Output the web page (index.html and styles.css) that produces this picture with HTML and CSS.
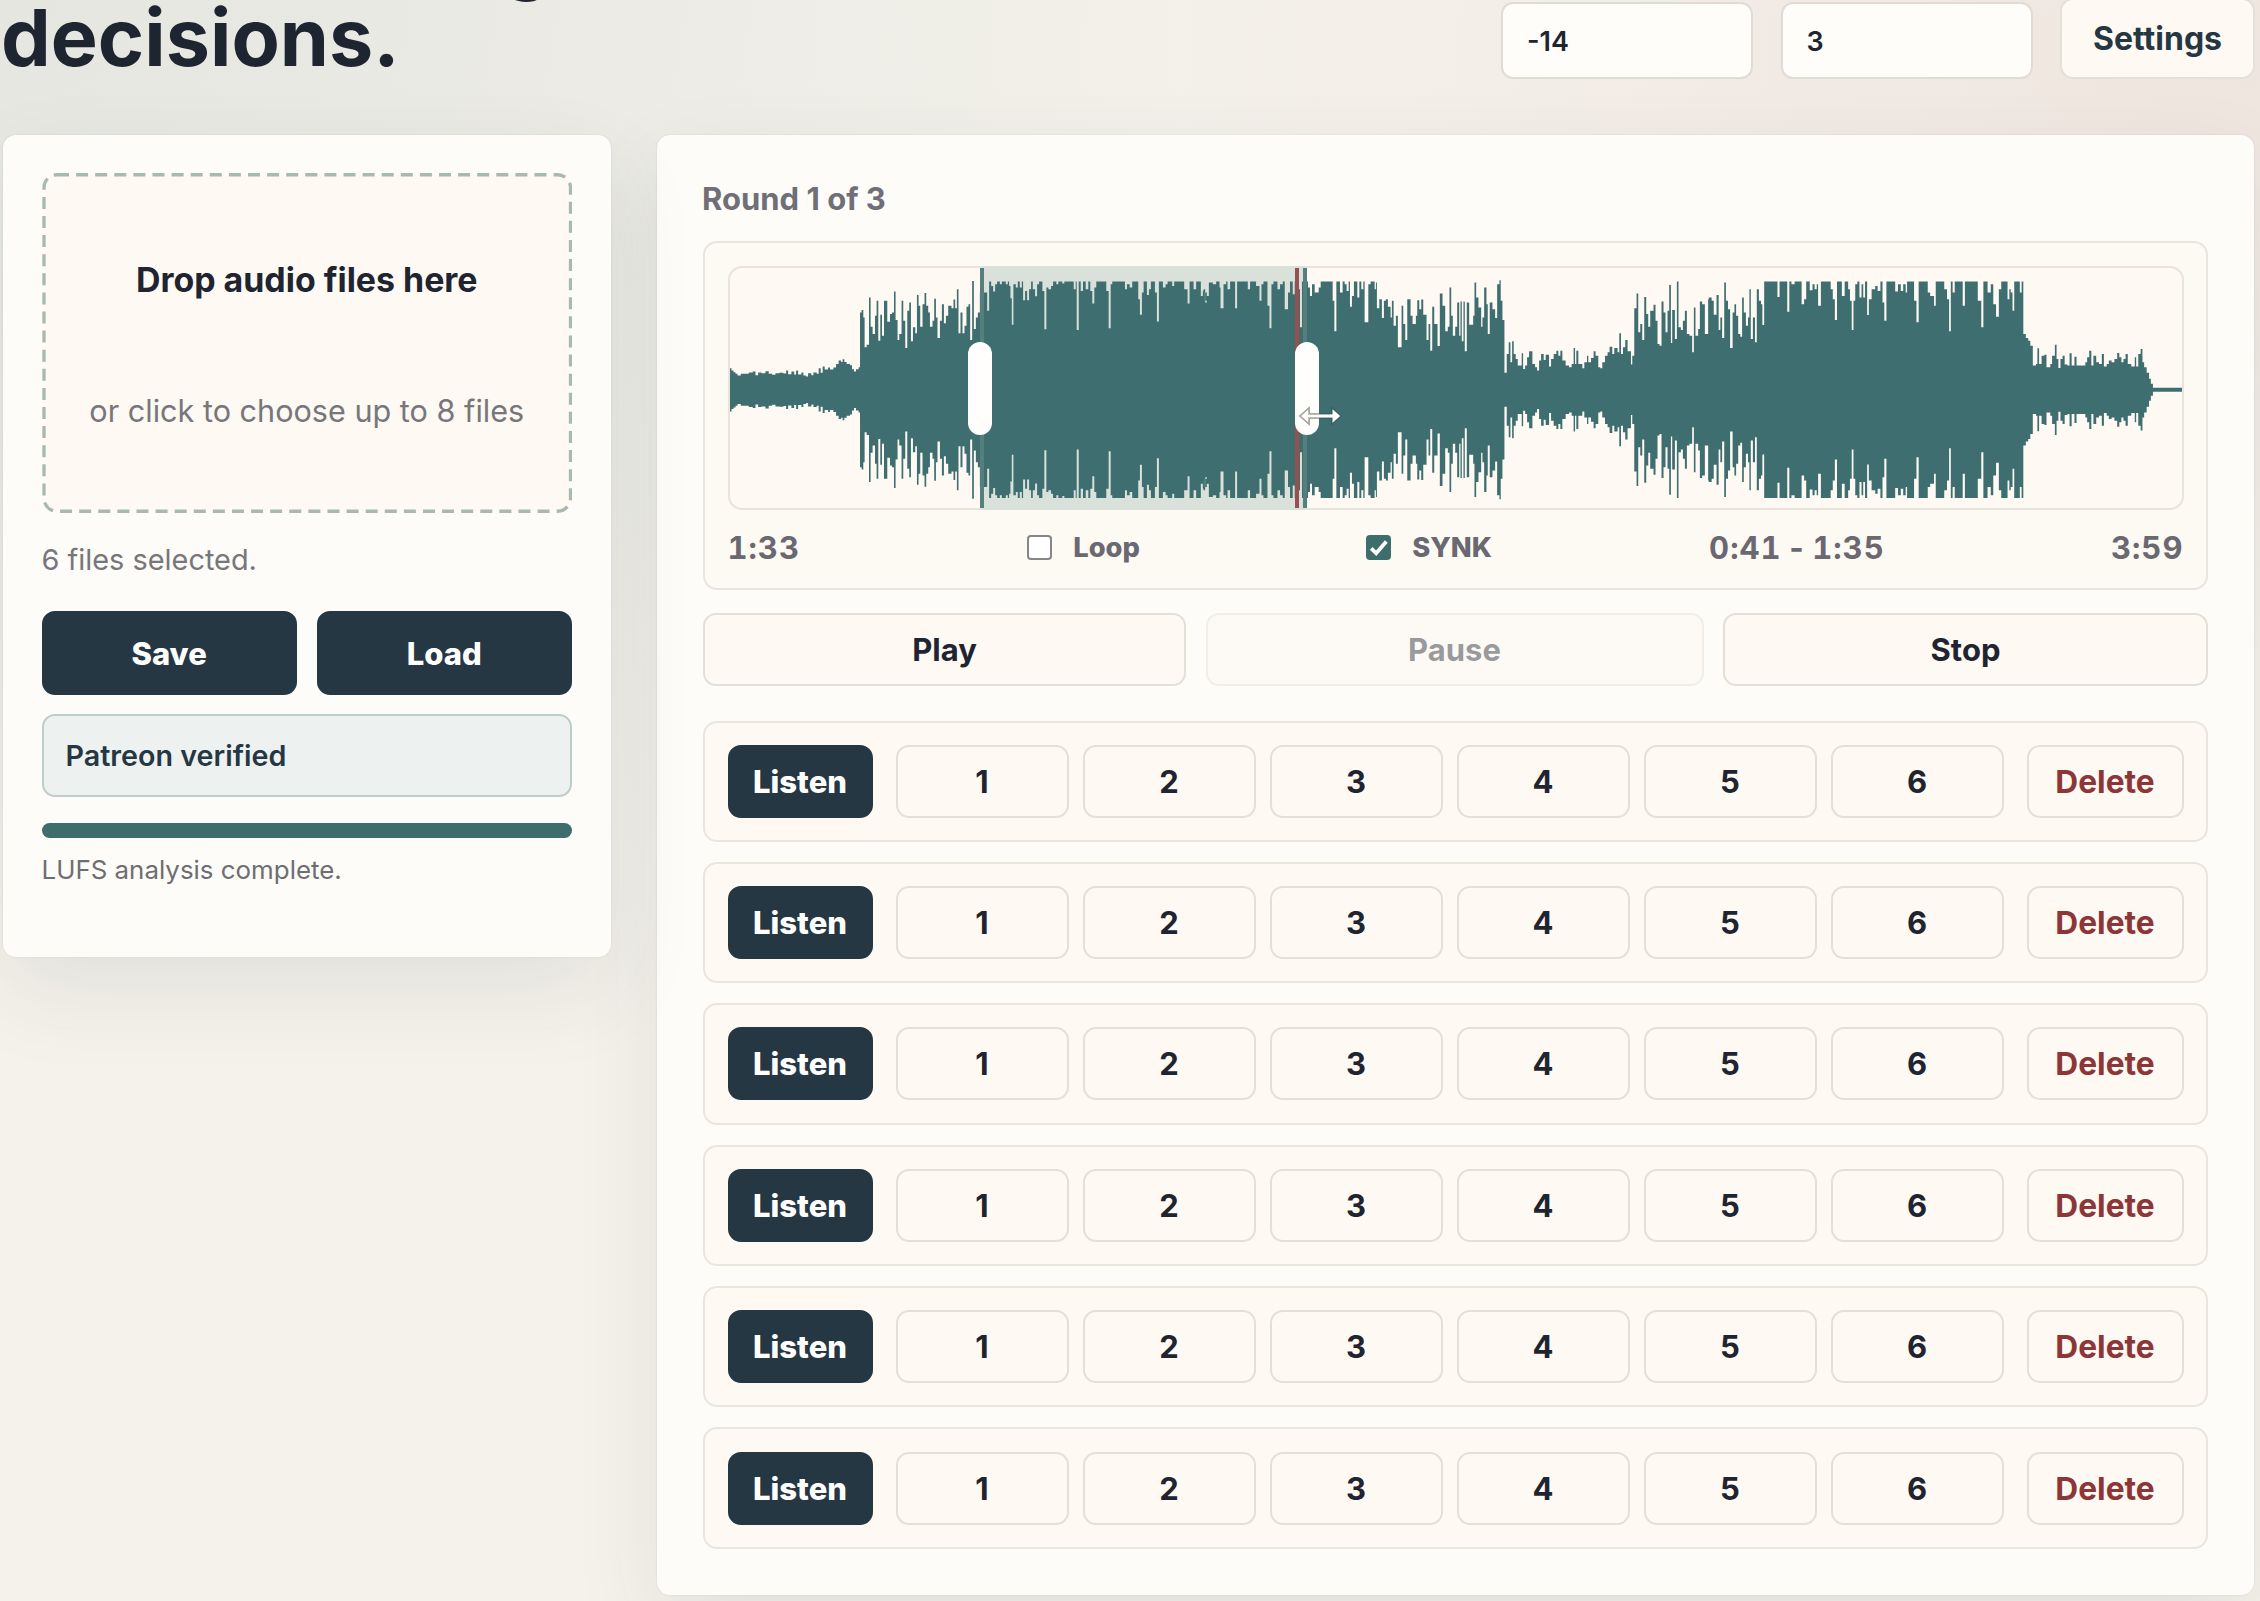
FILE: index.html
```html
<!DOCTYPE html>
<html lang="en">
<head>
<meta charset="utf-8">
<title>Blind listening</title>
<link rel="stylesheet" href="styles.css">
</head>
<body>
<header class="topbar">
  <h1 class="headline"><span class="headline-lead">g</span>decisions.</h1>
  <div class="controls">
    <div class="field">-14</div>
    <div class="field">3</div>
    <button class="btn settings">Settings</button>
  </div>
</header>
<main class="layout">
  <section class="card side">
    <div class="dropzone">
      <svg class="dashes" viewBox="0 0 530 340"><rect x="1.75" y="1.75" width="526.5" height="336.5" rx="13" fill="#fef9f3" stroke="#a9b8b0" stroke-width="3.3" stroke-dasharray="12 7.1"/></svg>
      <strong class="drop-title">Drop audio files here</strong>
      <span class="drop-hint">or click to choose up to 8 files</span>
    </div>
    <p class="selected">6 files selected.</p>
    <div class="side-actions">
      <button class="btn dark">Save</button>
      <button class="btn dark">Load</button>
    </div>
    <div class="verified">Patreon verified</div>
    <div class="progress"></div>
    <p class="status">LUFS analysis complete.</p>
  </section>
  <section class="card main">
    <h2 class="round">Round 1 of 3</h2>
    <div class="player">
      <div class="wave">
        <div class="selection"></div>
        <svg class="wave-svg" viewBox="0 0 1454 241" preserveAspectRatio="none"><path id="wave" fill="#3e6e70"/></svg>
        <div class="edge edge-start"></div>
        <div class="edge edge-end"></div>
        <div class="playhead"></div>
        <div class="handle handle-start"></div>
        <div class="handle handle-end"></div>
        <svg class="cursor" width="46" height="20" viewBox="0 0 46 20"><path d="M2 10 11 2V8H34V2L43 10 34 18V12H11V18Z" fill="#fff" stroke="#24484c" stroke-width="1.2" stroke-opacity=".7"/><path d="M20 12H11V18L2 10 11 2V8H20" fill="#fff" stroke="#aaa59c" stroke-width="1.5"/></svg>
      </div>
      <div class="meta">
        <span class="time">1:33</span>
        <label class="check"><span class="box"></span>Loop</label>
        <label class="check sync"><span class="box on"><svg viewBox="0 0 24 24"><path d="M5 12.8 9.8 17.6 19.5 6.2" fill="none" stroke="#fff" stroke-width="3.6"/></svg></span>SYNK</label>
        <span class="time">0:41 - 1:35</span>
        <span class="time">3:59</span>
      </div>
    </div>
    <div class="transport">
      <button class="btn">Play</button>
      <button class="btn" disabled>Pause</button>
      <button class="btn">Stop</button>
    </div>
    <div class="rows">
      <div class="row"><button class="btn dark">Listen</button><div class="ranks"><button class="btn">1</button><button class="btn">2</button><button class="btn">3</button><button class="btn">4</button><button class="btn">5</button><button class="btn">6</button></div><button class="btn delete">Delete</button></div>
      <div class="row"><button class="btn dark">Listen</button><div class="ranks"><button class="btn">1</button><button class="btn">2</button><button class="btn">3</button><button class="btn">4</button><button class="btn">5</button><button class="btn">6</button></div><button class="btn delete">Delete</button></div>
      <div class="row"><button class="btn dark">Listen</button><div class="ranks"><button class="btn">1</button><button class="btn">2</button><button class="btn">3</button><button class="btn">4</button><button class="btn">5</button><button class="btn">6</button></div><button class="btn delete">Delete</button></div>
      <div class="row"><button class="btn dark">Listen</button><div class="ranks"><button class="btn">1</button><button class="btn">2</button><button class="btn">3</button><button class="btn">4</button><button class="btn">5</button><button class="btn">6</button></div><button class="btn delete">Delete</button></div>
      <div class="row"><button class="btn dark">Listen</button><div class="ranks"><button class="btn">1</button><button class="btn">2</button><button class="btn">3</button><button class="btn">4</button><button class="btn">5</button><button class="btn">6</button></div><button class="btn delete">Delete</button></div>
      <div class="row"><button class="btn dark">Listen</button><div class="ranks"><button class="btn">1</button><button class="btn">2</button><button class="btn">3</button><button class="btn">4</button><button class="btn">5</button><button class="btn">6</button></div><button class="btn delete">Delete</button></div>
    </div>
  </section>
</main>
<script src="wave.js"></script>
</body>
</html>
```
FILE: styles.css
```css
* { box-sizing: border-box; }

body {
  margin: 0;
  height: 1601px;
  overflow: hidden;
  padding: 0 6px 0 3px;
  font-family: Inter, "Liberation Sans", sans-serif;
  color: #1f2530;
  background:
    radial-gradient(ellipse 1400px 1000px at 0 0, rgba(62, 110, 112, .09), rgba(62, 110, 112, 0)),
    radial-gradient(ellipse 1100px 620px at 2260px 60px, rgba(165, 70, 80, .08), rgba(165, 70, 80, 0)),
    #f5f2eb;
}

h1, h2, p { margin: 0; }

.topbar {
  display: flex;
  justify-content: space-between;
  align-items: flex-end;
  height: 79px;
}

.headline {
  font-size: 79px;
  line-height: 80px;
  font-weight: 700;
  margin: 0 0 2px -2px;
}
.headline-lead { display: block; width: 551px; margin-bottom: 1.5px; text-align: right; }

.controls { display: flex; align-items: flex-end; gap: 27.5px; margin-right: -1px; }

.field {
  width: 252px;
  height: 77px;
  padding-left: 24px;
  border: 2px solid #e0dcd4;
  border-radius: 12px;
  background: #fffdf9;
  font-size: 27px;
  font-weight: 600;
  line-height: 75px;
}

.btn {
  display: flex;
  align-items: center;
  justify-content: center;
  height: 73px;
  padding: 0;
  border: 2px solid #e4dfd7;
  border-radius: 13px;
  background: #fef9f2;
  color: #1f2530;
  font: 700 31px Inter, "Liberation Sans", sans-serif;
}
.btn.dark { background: #263744; border-color: #263744; color: #fff; font-weight: 800; font-size: 31px; }
.btn.settings { width: 195px; height: 81px; color: #263744; font-size: 32px; }
.btn.delete { color: #8c3638; font-size: 31.7px; }
.btn:disabled { opacity: .45; }

.layout {
  display: grid;
  grid-template-columns: 608px 1597px;
  justify-content: space-between;
  align-items: start;
  margin-top: 56px;
}

.card {
  background: #fdfcf8;
  border-radius: 13px;
  box-shadow: 0 34px 90px rgba(38, 55, 68, .09), 0 0 2px rgba(38, 55, 68, .12);
}

.side { position: relative; z-index: 0; height: 822px; padding: 38px 39px 38px 38.5px; }

.dropzone {
  position: relative;
  display: flex;
  flex-direction: column;
  align-items: center;
  justify-content: center;
  gap: 89px;
  height: 340px;
  padding-top: 4px;
}
.dashes { position: absolute; inset: 0; width: 100%; height: 100%; z-index: -1; }
.drop-title { font-size: 33.9px; line-height: 42px; font-weight: 650; }
.drop-hint { font-size: 30.6px; line-height: 42px; color: #77777b; }

.selected { margin-top: 26px; font-size: 28.9px; line-height: 42px; color: #77777b; }

.side-actions {
  display: grid;
  grid-template-columns: 1fr 1fr;
  gap: 20px;
  margin-top: 30px;
}
.side-actions .btn { height: 84px; }

.verified {
  height: 83px;
  margin-top: 19px;
  padding-left: 22px;
  border: 2px solid #bccdca;
  border-radius: 13px;
  background: #edf2f0;
  color: #263744;
  font-size: 28.7px;
  font-weight: 600;
  line-height: 79px;
}

.progress { height: 15px; margin-top: 26px; border-radius: 8px; background: #3e6e6c; }
.status { margin-top: 11.5px; font-size: 25.9px; line-height: 40px; color: #6e6e72; }

.main { height: 1460px; padding: 44px 46px 0; }

.round { margin-left: -1px; font-size: 31px; line-height: 40px; font-weight: 700; color: #706f78; }

.player {
  height: 349px;
  margin-top: 21.5px;
  padding: 23px 22.5px 0;
  border: 2px solid #e9e5dd;
  border-radius: 14px;
  background: #fdfaf3;
}

.wave {
  position: relative;
  height: 244px;
  border: 2px solid #e9e3db;
  border-radius: 14px;
  background: #fef9f3;
}
.wave-svg { position: absolute; inset: 0; width: 100%; height: 100%; }
.selection { position: absolute; left: 252px; width: 325px; top: -2px; bottom: -2px; background: #dae0da; }
.edge { position: absolute; top: 0; bottom: 0; width: 4px; background: #557f7c; }
.edge-start { left: 250px; }
.edge-end { left: 573px; }
.playhead { position: absolute; top: 0; bottom: 0; left: 565px; width: 4.5px; background: #95504f; }
.handle { position: absolute; top: 74px; width: 24px; height: 93px; border-radius: 12px; background: #fffefd; }
.handle-start { left: 238px; }
.handle-end { left: 565px; }
.cursor { position: absolute; left: 568px; top: 138px; }

.meta {
  display: flex;
  align-items: center;
  justify-content: space-between;
  height: 76px;
  color: #6a6870;
}
.time {
  font-size: 31px;
  font-weight: 700;
  font-variant-numeric: tabular-nums;
  letter-spacing: 1px;
  word-spacing: -4.5px;
}
.check { display: flex; align-items: center; font-size: 27.3px; font-weight: 800; }
.sync { margin-right: -9px; }
.check:not(.sync) { margin-left: 1px; }
.box {
  width: 25px;
  height: 25px;
  margin-right: 21px;
  border: 2px solid #85858a;
  border-radius: 4px;
  background: #fff;
}
.box.on { border: 0; background: #3e6e6c; }
.box svg { display: block; width: 25px; height: 25px; }

.transport {
  display: grid;
  grid-template-columns: 483px 498px 485px;
  justify-content: space-between;
  margin-top: 23px;
}

.rows { display: grid; gap: 20px; margin-top: 35px; }
.row {
  display: grid;
  grid-template-columns: 145px 1fr 157px;
  gap: 23px;
  align-items: center;
  height: 121.4px;
  padding: 0 22.5px;
  border: 2px solid #eae6de;
  border-radius: 14px;
  background: #fef9f3;
}
.ranks { display: grid; grid-template-columns: repeat(6, 1fr); gap: 14px; }
```
FILE: wave.js
```js
// Peak samples, one "x level" pair per step. Each part has its own origin and scale.
const parts = [
  { x: -39.5, scale: 3, data: '118 443,124 450,130 455,136 460,142 465,152 460,164 460,176 456,188 453,196 464,204 456,214 458,226 452,236 460,246 463,256 458,268 457,280 459,288 450,294 461,304 453,312 462,318 450,324 462,334 456,340 465,348 468,354 458,364 464,370 456,380 460,386 443,392 457,398 438,404 447,414 441,420 447,430 441,438 430,446 420,453 424,458 416,463 424,470 430,480 434,486 446,492 453,498 446,506 440,510 275,515 268,520 290,524 380,530 372,537 230,542 318,548 340,555 285,560 240,565 360,571 282,576 345,582 240,592 303,600 280,606 275,612 212,617 298,623 358,628 340,635 240,640 300,646 382,652 270,658 245,663 362,669 320,676 338,681 222,686 255,691 318,698 250,704 216,709 255,715 275,720 318,728 300,733 234,738 290,743 352,750 300,756 250,762 308,768 285,775 255,785 262,791 236,796 262,801 205,806 338,812 275,818 338,824 315,830 258,836 250,841 358,847 180,852 325,858 290,864 275,870 215,886 215,892 270,898 182,904 195,910 212,916 190,922 182,930 190,936 182,948 190,954 182,958 195,962 232,966 312,971 190,978 200,984 182,990 200,996 182,1000 238,1006 210,1012 238,1018 205,1024 182,1029 205,1036 226,1042 190,1048 182,1058 210,1064 326,1070 200,1076 205,1084 195,1090 182,1100 190,1106 182,1118 188,1124 182,1146 182,1152 205,1158 182,1161 328,1167 182,1173 210,1180 182,1188 205,1196 182,1202 210,1208 248,1214 200,1220 182,1250 210,1257 323,1263 190,1268 182,1306 205,1312 190,1320 200,1328 182,1346 235,1351 282,1357 215,1362 182,1372 222,1378 205,1384 182,1396 215,1402 302,1408 182,1420 200,1428 190,1434 182,1448 195,1454 182,1484 205,1494 248,1500 182,1512 205,1520 182,1534 225,1540 210,1546 240,1552 215' },
  { x: 470.5, scale: 3, data: '6 215,12 205,17 245,22 225,28 185,40 190,50 182,60 200,63 262,72 190,80 182,84 205,92 182,107 262,113 182,145 205,152 182,170 195,180 240,186 190,192 182,204 255,210 323,216 190,222 182,234 205,242 190,250 182,256 265,266 215,272 182,280 220,286 182,296 205,302 320,308 182,326 200,332 225,338 190,346 215,358 200,364 182,400 240,405 332,411 182,422 215,430 182,436 190,442 210,448 182,452 258,458 225,464 182,474 230,480 182,486 205,492 182,496 305,507 190,514 182,526 205,530 185,533 262,540 235,548 292,554 240,560 235,566 258,574 290,578 240,583 315,590 285,596 380,607 255,612 310,618 358,624 235,634 285,640 310,650 285,654 238,660 265,666 236,672 282,682 358,688 310,693 390,699 258,705 310,715 376,722 218,730 255,738 332,746 318,751 200,756 285,761 345,768 318,774 245,780 345,784 242,788 362,793 242,797 392,803 245,810 312,822 285,826 185,831 230,838 260,846 318,850 290,855 200,862 250,866 340,872 245,880 265,888 292,894 190,901 178,905 240,910 298,916 457,923 400,929 365,934 425,939 362,944 400,950 415,956 435,964 435,968 398,972 445,978 435,984 410,990 392,1000 430,1008 440,1014 450,1020 420,1026 400,1034 418,1040 402,1050 438,1056 415,1064 400,1072 390,1078 405,1084 390,1090 420,1100 435,1110 440,1118 430,1124 382,1128 430,1132 390,1138 430,1150 443,1156 425,1164 405,1168 425,1176 412,1184 392,1190 405,1198 440,1204 443,1210 425,1218 405,1226 395,1232 378,1240 400,1246 382,1256 395,1261 338,1266 400,1272 380,1279 358,1286 392,1296 432,1300 405,1306 262,1313 218,1318 335,1324 310,1330 358,1336 228,1342 280,1348 318,1354 270,1364 252,1370 300,1376 370,1382 375,1388 242,1394 275,1400 335,1406 270,1411 192,1416 367,1420 268,1428 355,1434 182,1439 320,1446 328,1452 300,1458 270,1464 340,1472 345,1480 395,1485 260,1490 345,1498 325,1503 242,1510 250,1518 340,1528 235' },
  { x: 980.5, scale: 2.851, data: '0 230,8 240,14 282,22 222,28 328,33 290,38 352,44 185,49 240,55 265,61 382,68 275,73 250,78 285,84 340,90 348,95 230,100 275,106 315,112 290,116 205,120 355,126 290,132 365,137 205,143 240,149 250,153 313,158 182,196 228,202 182,224 273,230 182,236 190,245 182,265 250,272 235,278 182,288 208,296 190,302 205,308 190,312 255,320 182,348 205,354 235,360 298,366 182,380 225,388 182,398 205,403 240,408 328,413 240,418 190,424 182,430 230,436 190,441 230,446 182,452 283,457 235,465 205,475 195,482 210,490 182,496 245,501 300,507 182,532 212,540 190,548 210,555 190,562 215,566 182,586 240,593 305,599 182,625 215,632 225,643 255,648 182,672 205,680 235,686 332,691 182,696 215,702 182,725 255,731 182,768 240,778 320,784 182,796 215,805 190,812 250,820 288,828 205,835 182,853 235,858 205,862 215,867 270,872 182,888 215,893 182,898 340,905 352,912 360,918 375,925 435,934 430,938 383,943 430,950 405,958 402,964 440,975 430,980 405,988 372,993 415,998 442,1004 415,1010 405,1016 432,1024 435,1030 398,1036 435,1044 408,1050 435,1075 425,1080 410,1086 390,1092 435,1098 405,1106 425,1114 430,1122 400,1128 438,1136 430,1142 420,1150 425,1158 415,1166 397,1172 410,1178 425,1184 415,1190 400,1196 430,1206 438,1216 410,1220 438,1226 400,1233 385,1238 425,1243 440,1250 457,1257 475,1262 490,1268 502' }
];

const samples = [];
for (const part of parts) {
  for (const pair of part.data.split(',')) {
    const [x, level] = pair.split(' ').map(Number);
    samples.push([part.x + (x - 1) / part.scale, (508 - level) / 3]);
  }
}
samples.push([1454, 2]);

const middle = 122.3;
let upper = '';
let lower = '';
for (let i = 0; i < samples.length - 1; i++) {
  const [x, half] = samples[i];
  const next = samples[i + 1][0];
  upper += `L${x.toFixed(1)} ${(middle - half).toFixed(1)}H${next.toFixed(1)}`;
  lower = `L${next.toFixed(1)} ${(middle + half).toFixed(1)}H${x.toFixed(1)}` + lower;
}
document.getElementById('wave').setAttribute('d', `M0 ${middle}${upper}${lower}Z`);
```
